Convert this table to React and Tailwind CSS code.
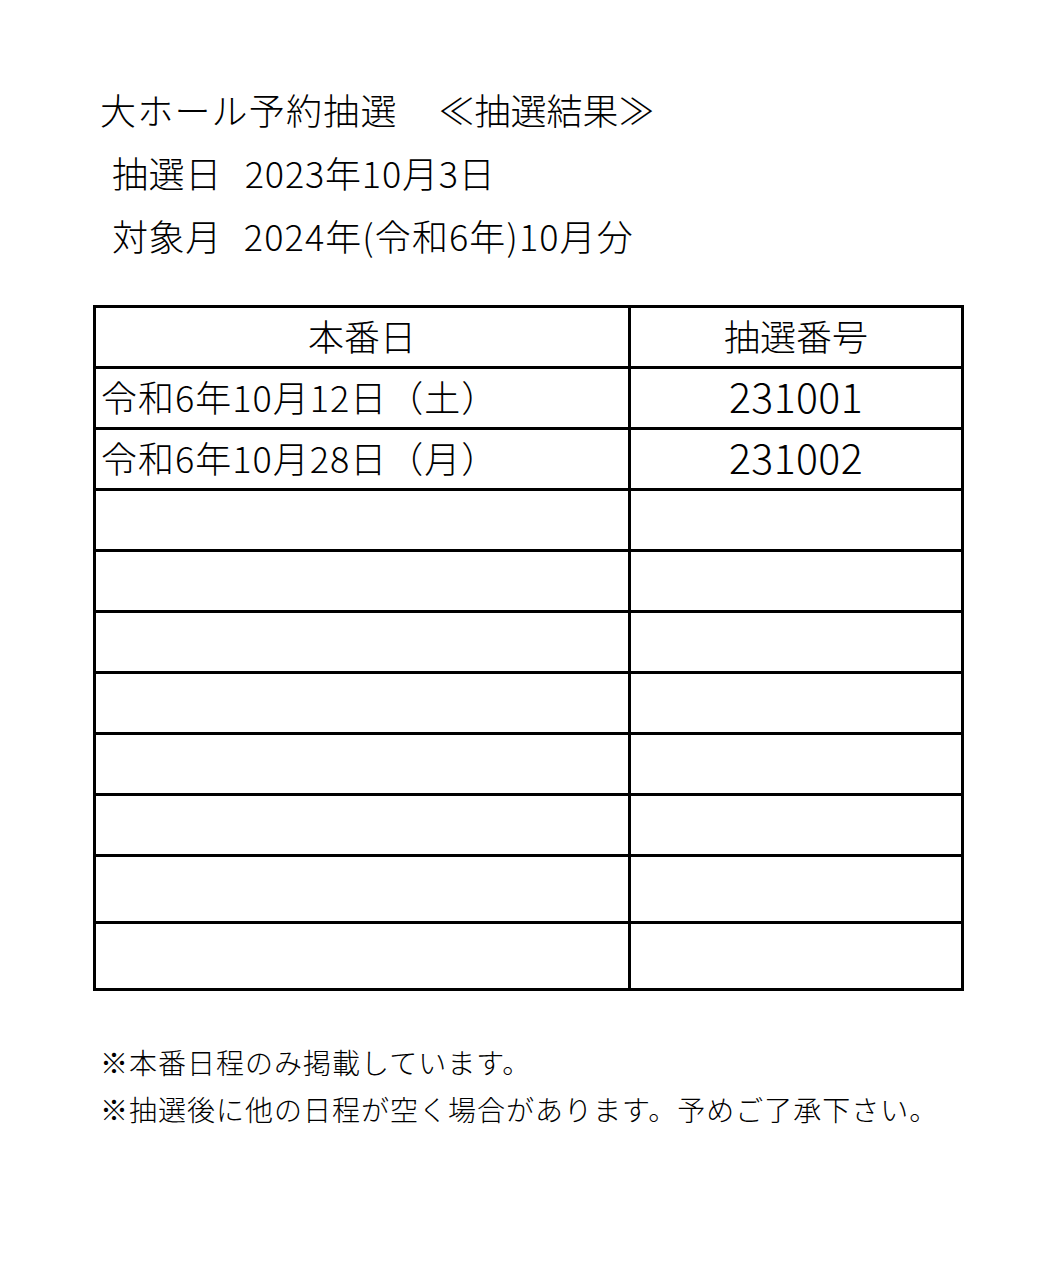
const rows = [
  { date: '令和6年10月12日（土）', no: '231001' },
  { date: '令和6年10月28日（月）', no: '231002' },
  { date: '', no: '' },
  { date: '', no: '' },
  { date: '', no: '' },
  { date: '', no: '' },
  { date: '', no: '' },
  { date: '', no: '' },
  { date: '', no: '', tall: true },
  { date: '', no: '', tall: true },
];

export default function App() {
  return (
    <div
      className="w-[1052px] h-[1268px] bg-white text-black font-light pl-[93px] pt-[78px]"
      style={{ fontFamily: '"Noto Sans CJK JP", "Noto Sans", sans-serif' }}
    >
      {/* Heading */}
      <div className="text-[36px]">
        <div className="h-[63px] leading-[63px] ml-[7px] whitespace-pre tracking-[1.2px]">
          大ホール予約抽選<span className="ml-[41px] tracking-[0px]">≪抽選結果≫</span>
        </div>
        <div className="h-[63px] leading-[63px] ml-[19px] whitespace-pre tracking-[0.6px]">
          抽選日<span className="ml-[23px] tracking-[0.8px]">2023年10月3日</span>
        </div>
        <div className="h-[63px] leading-[63px] ml-[19px] whitespace-pre tracking-[0.6px]">
          対象月<span className="ml-[22px] tracking-[1.1px]">2024年(令和6年)10月分</span>
        </div>
      </div>

      {/* Result table */}
      <div className="mt-[38px] w-[871px] border-[3px] border-black">
        <div className="flex h-[58px] text-[36px]">
          <div className="w-[532px] flex items-center justify-center pb-[5px]">本番日</div>
          <div className="w-[333px] border-l-[3px] border-black flex items-center justify-center pb-[5px]">抽選番号</div>
        </div>
        {rows.map((r, i) => (
          <div key={i} className={`flex border-t-[3px] border-black ${r.tall ? 'h-[67px]' : 'h-[61px]'}`}>
            <div className="w-[532px] flex items-center pl-[5px] pb-[4px] text-[36px] tracking-[1px] whitespace-nowrap">{r.date}</div>
            <div className="w-[333px] border-l-[3px] border-black flex items-center justify-center pb-[5px] text-[41px] tracking-[0.4px]">{r.no}</div>
          </div>
        ))}
      </div>

      {/* Notes */}
      <div className="mt-[48px] ml-[7px] text-[28px] tracking-[1px]">
        <div className="h-[47px] leading-[47px]">※本番日程のみ掲載しています。</div>
        <div className="h-[47px] leading-[47px]">※抽選後に他の日程が空く場合があります。予めご了承下さい。</div>
      </div>
    </div>
  );
}
